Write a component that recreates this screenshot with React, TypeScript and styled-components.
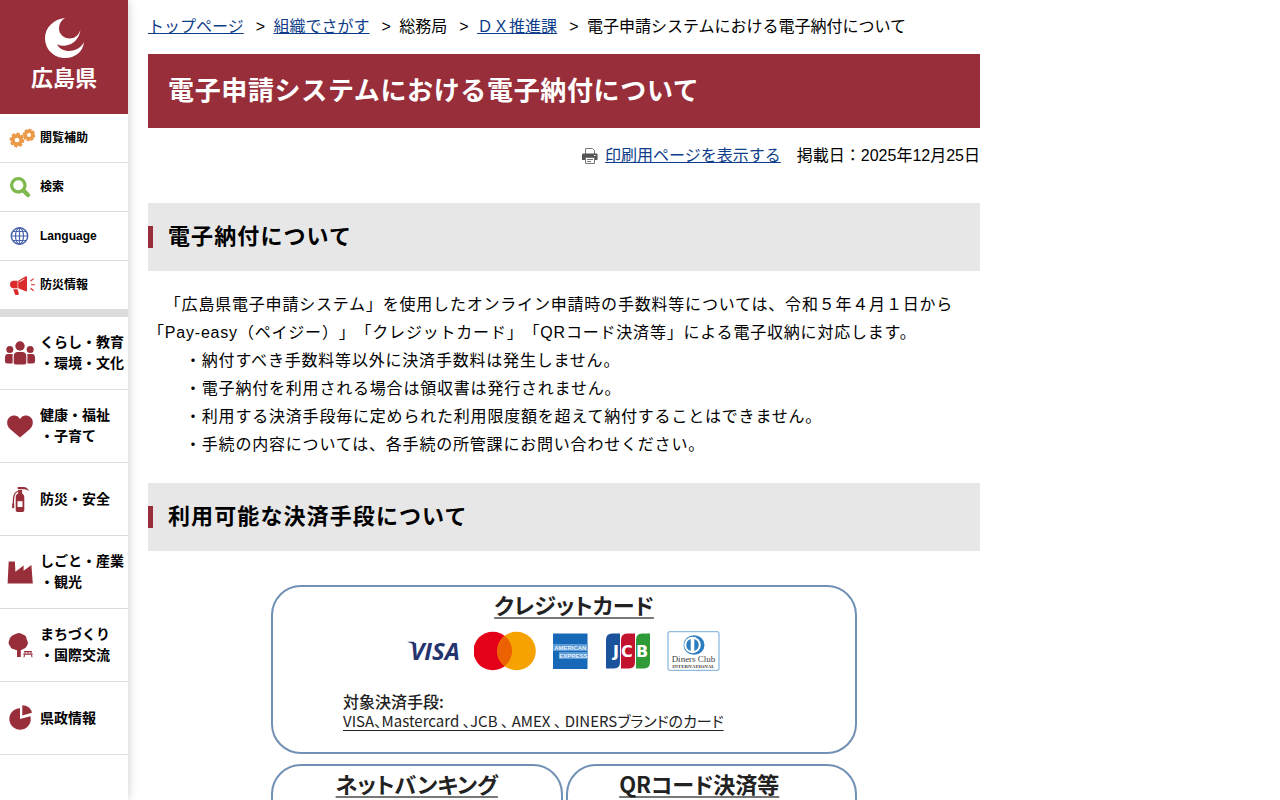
import React from "react";
import type { ReactNode } from "react";
import styled, { createGlobalStyle } from "styled-components";

const RED = "#982e3a";
const LINE = "#dcdcdc";

const GlobalStyle = createGlobalStyle`
  * { box-sizing: border-box; }
  html { scrollbar-width: none; }
  body {
    margin: 0;
    background: #fff;
    color: #000;
    font: 16px/28px "Liberation Sans", "Noto Sans CJK JP", sans-serif;
    text-spacing-trim: space-all;
  }
  h1, h2, h3, p, ul, ol, figure { margin: 0; padding: 0; }
  ul, ol { list-style: none; }
  a { color: #0e3e89; }
`;

const Page = styled.div`
  display: flex;
  align-items: flex-start;
`;

const Sidebar = styled.header`
  position: sticky;
  top: 0;
  flex: 0 0 128px;
  min-height: 100vh;
  box-shadow: 0 0 10px rgba(0, 0, 0, 0.2);
  background: #fff;
`;

const Brand = styled.a`
  display: flex;
  flex-direction: column;
  align-items: center;
  gap: 4px;
  padding: 17px 0 19px;
  background: ${RED};
  color: #fff;
  font-size: 22px;
  font-weight: bold;
  line-height: 32px;
  text-decoration: none;
  svg { display: block; }
`;

const Tools = styled.ul`
  border-bottom: 8px solid ${LINE};
  font-size: 12px;
  line-height: 18px;
`;

const Topics = styled.ul`
  font-size: 14px;
  line-height: 21px;
`;

const MenuItem = styled.li`
  display: flex;
  min-height: 73px;
  border-bottom: 1px solid ${LINE};
  ${Tools} & { min-height: 49px; }
  ${Tools} &:last-child {
    min-height: 48px;
    border-bottom: 0;
  }
`;

const MenuLink = styled.a`
  display: flex;
  flex: 1;
  align-items: center;
  color: #000;
  font-weight: bold;
  text-decoration: none;
  white-space: pre;
`;

const IconCell = styled.span`
  display: flex;
  flex: 0 0 40px;
  justify-content: center;
`;

const Main = styled.main`
  flex: 0 1 872px;
  min-width: 0;
  padding: 13px 20px 0;
`;

const Crumbs = styled.ol`
  display: flex;
  flex-wrap: wrap;
  margin-bottom: 13px;
  white-space: nowrap;
  li + li::before {
    content: ">\\00a0";
    margin: 0 4px 0 12px;
  }
`;

const Title = styled.h1`
  padding: 18px 20px;
  background: ${RED};
  color: #fff;
  font-size: 26px;
  line-height: 38px;
  letter-spacing: 0.025em;
`;

const Meta = styled.div`
  display: flex;
  justify-content: flex-end;
  gap: 16px;
  padding: 14px 0 33px;
`;

const PrintLink = styled.span`
  display: flex;
  align-items: center;
  gap: 7px;
`;

const Heading = styled.h2`
  display: flex;
  align-items: center;
  margin-bottom: 20px;
  padding: 18px 0;
  background: #e7e7e7;
  font-size: 22px;
  line-height: 32px;
  letter-spacing: 0.05em;
  &::before {
    content: "";
    width: 5px;
    height: 22px;
    margin-right: 15px;
    background: ${RED};
  }
`;

const Prose = styled.div`
  margin-bottom: 24px;
  letter-spacing: 0.05em;
`;

const Notes = styled.ul`
  padding-left: 37px;
`;

const Figure = styled.figure`
  display: grid;
  grid-template-columns: 1fr 1fr;
  gap: 10px 3px;
  max-width: 586px;
  margin: 34px auto 0;
  color: #222;
  font-family: "Noto Sans CJK JP", sans-serif;
  font-feature-settings: "palt";
`;

const Panel = styled.section<{ $wide?: boolean }>`
  grid-column: ${(p) => (p.$wide ? "1 / -1" : "auto")};
  min-height: 169px;
  padding-top: 2px;
  border: 2px solid #7090b5;
  border-radius: 30px;
`;

const PanelTitle = styled.h3<{ $inset?: string }>`
  padding: ${(p) => p.$inset ?? "0"};
  font-size: 22px;
  font-weight: bold;
  line-height: 30px;
  text-align: center;
  text-decoration: underline #777 2px;
  text-underline-offset: 3px;
  text-decoration-skip-ink: none;
`;

const Brands = styled.div`
  display: flex;
  align-items: center;
  justify-content: center;
  gap: 15px;
  height: 64px;
  padding-right: 2px;
`;

const Targets = styled.div`
  padding: 8px 0 0 70px;
  line-height: 20px;
`;

const TargetsLabel = styled.p`
  font-size: 16px;
  font-weight: 500;
`;

const TargetsList = styled.p`
  font-size: 15px;
  text-decoration: underline;
  text-underline-offset: 3px;
  text-decoration-skip-ink: none;
`;

function Icon({ color = RED, children }: { color?: string; children: ReactNode }) {
  return (
    <svg width="30" height="30" viewBox="0 0 30 30" fill={color} stroke="none" aria-hidden="true">
      {children}
    </svg>
  );
}

function Gear({ x, y, r, color }: { x: number; y: number; r: number; color: string }) {
  return (
    <g transform={`translate(${x} ${y})`} fill={color}>
      {[10, 55, 100, 145, 190, 235, 280, 325].map((a) => (
        <rect key={a} x={-1.7} y={-r} width={3.4} height={3} rx={0.6} transform={`rotate(${a})`} />
      ))}
      <circle r={r * 0.57} fill="none" stroke={color} strokeWidth={r * 0.5} />
    </g>
  );
}

const GearsIcon = () => (
  <Icon>
    <Gear x={12} y={17} r={7.4} color="#eb9a4a" />
    <Gear x={24} y={12} r={6.2} color="#eb9a4a" />
  </Icon>
);

const SearchIcon = () => (
  <Icon color="none">
    <circle cx="13.3" cy="13.3" r="6.7" stroke="#7fb84c" strokeWidth="3.3" />
    <path d="M18.7 18.7 23 23" stroke="#7fb84c" strokeWidth="4.4" strokeLinecap="round" />
  </Icon>
);

const GlobeIcon = () => (
  <Icon color="none">
    <g stroke="#4a63ae" strokeWidth="1.2">
      <circle cx="14.5" cy="15" r="8.2" strokeWidth="1.5" />
      <ellipse cx="14.5" cy="15" rx="4" ry="8.2" />
      <path d="M14.500 6.800v16.400M6.300 15h16.400M7.800 10.500h13.400M7.800 19.500h13.400" />
    </g>
  </Icon>
);

const HornIcon = () => (
  <Icon color="#dc2b2b">
    <path d="M13.200 10.800 20.800 6.300Q22 5.800 22 7v13.600q0 1.200-1.200.6L13.200 18.200ZM12.600 10.700v7.500H8Q5 17.700 5 14.500t3-3.800ZM8.200 19.200h4.300l1.300 4.400q.2 1.100-.9 1.300l-1.800.2q-.9 0-1.100-.9Z" />
    <path d="m25.500 11 3.200-2.400M26 14.700h4M25.500 18.300l3.200 2.400" stroke="#dc2b2b" strokeWidth="1.1" />
    <path d="M14.500 11.800 19.500 9" stroke="#fff" strokeWidth=".8" />
  </Icon>
);

const PeopleIcon = () => (
  <Icon>
    <circle cx="15" cy="8" r="4.7" />
    <circle cx="4.800" cy="11.500" r="3.500" />
    <circle cx="25.200" cy="11.500" r="3.500" />
    <path d="M8.700 18.500q0-4.500 4-4.500h4.600q4 0 4 4.500v6q0 2-2 2h-8.600q-2 0-2-2ZM7.600 16v9.500H2.500Q0 25.500 0 23v-3.500Q0 16 3 16ZM22.400 16v9.500h5.100q2.500 0 2.500-2.500v-3.500q0-3.500-3-3.500Z" />
  </Icon>
);

const HeartIcon = () => (
  <Icon>
    <path d="M15 26.600 5 18C1.200 14.400 1.500 9 4.300 6.500 7.700 3.500 12.600 4 15 8c2.400-4 7.300-4.500 10.700-1.500C28.500 9 28.800 14.400 25 18Z" />
  </Icon>
);

const ExtinguisherIcon = () => (
  <Icon>
    <path d="M10.700 13.500q0-3.300 3.100-4.200h2.400q3.100.9 3.100 4.200v12.700q0 1.800-1.800 1.800h-5q-1.800 0-1.800-1.800ZM13.200 6h3.900v4h-3.900ZM12.700 3h5.800q3.900.2 5.500 4-2.700-2-5.200-1.700h-6.100Z" />
    <path d="M13.500 7Q8.700 8.500 8.500 15l-.3 9" fill="none" stroke={RED} strokeWidth="1.300" />
    <path d="M7.200 19.500h2v4.700h-2Z" />
    <path d="M12.500 17.200h5V23h-5Z" fill="#fff" />
  </Icon>
);

const FactoryIcon = () => (
  <Icon>
    <path d="M3.700 4.500h6.200l.5 10.300 8.200-6.300v5.300L26.400 8l1.400 18.600H2.600Z" />
  </Icon>
);

const TreeIcon = () => (
  <Icon>
    <path d="M9.500 4.500q4.500-3 8.500 0 3.600 1 3.600 4.700 2.400 3.500.5 6.300-1 3-4.400 3.800-2 1.500-4 .8-2.500.8-4.400-.9-3.600-.4-4.200-3.300-2.600-2.400-.8-5.700.6-4.200 5.200-5.700Z" />
    <path d="M12 18h3.800v9H12ZM19.300 21h7.400v1.300h-7.400ZM18.300 23.500h9.400v1.300h-9.400Z" />
    <path d="M20 21v2.500M26 21v2.500M19.500 24.500 19 27.300M26.500 24.500l.5 2.800M23 21v2.500" fill="none" stroke={RED} />
  </Icon>
);

const PieIcon = () => (
  <Icon>
    <path d="M15 16V5.300A10.700 10.700 0 1 0 25.400 13.200Z" />
    <path d="M17.300 12.600V2.300A10.300 10.300 0 0 1 27 9.800Z" />
  </Icon>
);

const MoonLogo = () => (
  <svg width="40" height="42" viewBox="0 0 40 42" fill="#fff" aria-hidden="true">
    <path d="M21 1C10 2 1 10.500 1 21c0 11.500 9 20 20 20 10 0 18-6 19-16-3 5.500-8 9-15 9-5 0-10-2.500-12-6.800 3 1.500 6 1.900 9 1.300C30 27 35 22 36.500 12.800 34 19.500 30 21.500 26 21.500c-6.500 0-11-4.500-11-10C15 7 17 3.500 21 1Z" />
  </svg>
);

const PrinterIcon = () => (
  <svg width="16" height="16" viewBox="0 0 16 16" aria-hidden="true">
    <path d="M3.500 6V.5h7L12.500 2.500V6" fill="#fff" stroke="#777" />
    <path d="M1.500 5.500h13q1 0 1 1V12H0V6.500q0-1 1.500-1Z" fill="#555" />
    <path d="M3.500 9.500h9v6h-9Z" fill="#fff" stroke="#777" />
    <path d="M5 11.500h6M5 13.500h4" stroke="#777" />
    <path d="M12 7.500h1.500" stroke="#fff" />
  </svg>
);

const VisaLogo = () => (
  <svg width="52" height="40" viewBox="0 0 52 40" fill="#26346e">
    <path d="M0 10.800h7l2 5Q5 12 0 10.800Z" />
    <text x="28" y="29" textAnchor="middle" fontFamily="Open Sans, sans-serif" fontSize="24" fontWeight="bold" fontStyle="italic">VISA</text>
  </svg>
);

const MastercardLogo = () => (
  <svg width="64" height="40" viewBox="0 0 64 40" aria-hidden="true">
    <circle cx="18.800" cy="20" r="19.300" fill="#e30018" />
    <circle cx="42.500" cy="20" r="19.300" fill="#f6a200" />
    <path d="M30.650 4.800a19.300 19.300 0 0 1 0 30.400 19.300 19.300 0 0 1 0-30.400Z" fill="#ec6100" />
  </svg>
);

const AmexLogo = () => (
  <svg width="38" height="40" viewBox="0 0 38 40" fontFamily="Liberation Sans, sans-serif" fontSize="6" fontWeight="bold" fill="#e4f0fa">
    <path d="M0 2.500h34.500v35.500H0Z" fill="#1769b8" />
    <path d="M0 13h34.500v7H0ZM6 21h28.500v7H6Z" fill="#5c9bd6" />
    <text x="17.300" y="18.700" textAnchor="middle">AMERICAN</text>
    <text x="34.500" y="26.700" textAnchor="end">EXPRESS</text>
  </svg>
);

const JcbLogo = () => (
  <svg width="46" height="40" viewBox="0 0 46 40">
    <path d="M6 2.500h8V31q0 6.500-6 6.500H0V9q0-6.500 6-6.500Z" fill="#1b529c" />
    <path d="M21 2.500h8V31q0 6.500-6 6.500h-8V9q0-6.500 6-6.500Z" fill="#c2132f" />
    <path d="M36 2.500h8V31q0 6.500-6 6.500h-8V9q0-6.500 6-6.500Z" fill="#2f9b38" />
    <text x="7 15 30" y="25.500" fill="#fff" fontFamily="DejaVu Sans, sans-serif" fontSize="16" fontWeight="bold">JCB</text>
  </svg>
);

const DinersLogo = () => (
  <svg width="53" height="40" viewBox="0 0 53 40" textAnchor="middle" fill="#444" fontFamily="Liberation Serif, serif">
    <rect x="1" y=".7" width="51" height="38.600" rx="2" fill="#fff" stroke="#8fbbe0" strokeWidth="1.300" />
    <ellipse cx="27" cy="14" rx="10.500" ry="9.800" fill="#2b7dc0" />
    <circle cx="25.500" cy="14" r="8.300" fill="#fff" />
    <path d="M23.700 8v12a6.300 6.300 0 0 1 0-12ZM27.300 8v12a6.300 6.300 0 0 0 0-12Z" fill="#2b7dc0" />
    <text x="26.500" y="31" fontSize="9">Diners Club</text>
    <text x="26.500" y="36.500" fontSize="5" fontWeight="bold">INTERNATIONAL</text>
  </svg>
);

const tools = [
  { label: "閲覧補助", icon: <GearsIcon /> },
  { label: "検索", icon: <SearchIcon /> },
  { label: "Language", icon: <GlobeIcon /> },
  { label: "防災情報", icon: <HornIcon /> },
];

const topics = [
  { label: "くらし・教育\n・環境・文化", icon: <PeopleIcon /> },
  { label: "健康・福祉\n・子育て", icon: <HeartIcon /> },
  { label: "防災・安全", icon: <ExtinguisherIcon /> },
  { label: "しごと・産業\n・観光", icon: <FactoryIcon /> },
  { label: "まちづくり\n・国際交流", icon: <TreeIcon /> },
  { label: "県政情報", icon: <PieIcon /> },
];

const renderItem = ({ label, icon }: { label: string; icon: ReactNode }) => (
  <MenuItem key={label}>
    <MenuLink href="#">
      <IconCell>{icon}</IconCell>
      {label}
    </MenuLink>
  </MenuItem>
);

export default function App() {
  return (
    <>
      <GlobalStyle />
      <Page lang="ja">
        <Sidebar>
          <Brand href="#">
            <MoonLogo />
            広島県
          </Brand>
          <nav>
            <Tools>{tools.map(renderItem)}</Tools>
            <Topics>{topics.map(renderItem)}</Topics>
          </nav>
        </Sidebar>
        <Main>
          <Crumbs>
            <li><a href="#">トップページ</a></li>
            <li><a href="#">組織でさがす</a></li>
            <li>総務局</li>
            <li><a href="#">ＤＸ推進課</a></li>
            <li>電子申請システムにおける電子納付について</li>
          </Crumbs>
          <Title>電子申請システムにおける電子納付について</Title>
          <Meta>
            <PrintLink>
              <PrinterIcon />
              <a href="#">印刷用ページを表示する</a>
            </PrintLink>
            <span>掲載日：2025年12月25日</span>
          </Meta>
          <Heading>電子納付について</Heading>
          <Prose>
            <p>　「広島県電子申請システム」を使用したオンライン申請時の手数料等については、令和５年４月１日から「Pay-easy（ペイジー）」「クレジットカード」「QRコード決済等」による電子収納に対応します。</p>
            <Notes>
              <li>・納付すべき手数料等以外に決済手数料は発生しません。</li>
              <li>・電子納付を利用される場合は領収書は発行されません。</li>
              <li>・利用する決済手段毎に定められた利用限度額を超えて納付することはできません。</li>
              <li>・手続の内容については、各手続の所管課にお問い合わせください。</li>
            </Notes>
          </Prose>
          <Heading>利用可能な決済手段について</Heading>
          <Figure>
            <Panel $wide>
              <PanelTitle $inset="0 0 0 20px">クレジットカード</PanelTitle>
              <Brands>
                <VisaLogo />
                <MastercardLogo />
                <AmexLogo />
                <JcbLogo />
                <DinersLogo />
              </Brands>
              <Targets>
                <TargetsLabel>対象決済手段:</TargetsLabel>
                <TargetsList>VISA、Mastercard 、JCB 、 AMEX 、 DINERSブランドのカード</TargetsList>
              </Targets>
            </Panel>
            <Panel>
              <PanelTitle>ネットバンキング</PanelTitle>
            </Panel>
            <Panel>
              <PanelTitle $inset="0 24px 0 0">QRコード決済等</PanelTitle>
            </Panel>
          </Figure>
        </Main>
      </Page>
    </>
  );
}
